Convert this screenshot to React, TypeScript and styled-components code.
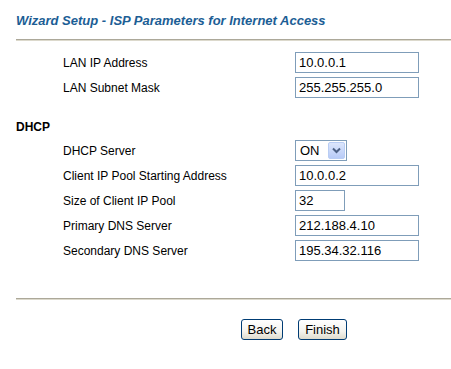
import React from "react";
import styled, { createGlobalStyle } from "styled-components";

const GlobalStyle = createGlobalStyle`
    html, body {
        margin: 0;
        padding: 0;
        background: #ffffff;
    }
    body {
        font-family: "Liberation Sans", Arial, sans-serif;
        font-size: 12px;
        color: #000000;
    }
`;

const Page = styled.div`
    width: 451px;
    height: 369px;
    padding: 13px 0 0 16px;
    box-sizing: border-box;
    overflow: hidden;
`;

const Title = styled.h1`
    margin: 0;
    height: 20px;
    font-size: 13px;
    font-weight: bold;
    font-style: italic;
    color: #1c5e95;
    line-height: 16px;
`;

const Divider = styled.div`
    height: 2px;
    margin-top: ${(p: { $top: number }) => p.$top}px;
    background: #aca899;
    border-bottom: 1px solid #dcd9cc;
    box-sizing: border-box;
`;

const Fields = styled.div`
    display: flex;
    flex-direction: column;
    gap: 4px;
    padding-left: 47px;
    margin-top: ${(p: { $top: number }) => p.$top}px;
`;

const Row = styled.div`
    display: grid;
    grid-template-columns: 232px auto;
    align-items: center;
    height: 21px;
`;

const Label = styled.span`
    font-size: 12px;
    color: #000000;
`;

const Box = styled.div<{ $w: number }>`
    width: ${(p) => p.$w}px;
    height: 21px;
    box-sizing: border-box;
    border: 1px solid #7f9db9;
    padding: 0 3px;
    font-size: 13px;
    line-height: 19px;
    background: #ffffff;
    white-space: nowrap;
`;

const SectionHead = styled.div`
    margin-top: 21px;
    font-size: 12px;
    font-weight: bold;
    height: 16px;
    line-height: 16px;
`;

const Select = styled.div`
    display: flex;
    align-items: center;
    justify-content: space-between;
    width: 52px;
    height: 21px;
    box-sizing: border-box;
    border: 1px solid #7f9db9;
    padding: 1px 1px 1px 4px;
    font-size: 13px;
    background: #ffffff;
`;

const ArrowButton = styled.span`
    display: flex;
    align-items: center;
    justify-content: center;
    width: 17px;
    height: 17px;
    box-sizing: border-box;
    border: 1px solid #b9cdf4;
    border-radius: 2px;
    background: linear-gradient(#dce6fc, #b8cbf7);
`;

const Buttons = styled.div`
    display: flex;
    gap: 15px;
    padding-left: 225px;
    margin-top: 19px;
`;

const Button = styled.button<{ $w: number }>`
    width: ${(p) => p.$w}px;
    height: 21px;
    padding: 0;
    box-sizing: border-box;
    border: 1px solid #003c74;
    border-radius: 3px;
    background: linear-gradient(#ffffff 0%, #f4f3ee 60%, #dedbcd 100%);
    font-family: "Liberation Sans", Arial, sans-serif;
    font-size: 13px;
    color: #000000;
`;

const lanRows = [
    { label: "LAN IP Address", value: "10.0.0.1", w: 124 },
    { label: "LAN Subnet Mask", value: "255.255.255.0", w: 124 },
];

const dhcpRows = [
    { label: "Client IP Pool Starting Address", value: "10.0.0.2", w: 124 },
    { label: "Size of Client IP Pool", value: "32", w: 50 },
    { label: "Primary DNS Server", value: "212.188.4.10", w: 124 },
    { label: "Secondary DNS Server", value: "195.34.32.116", w: 124 },
];

const App: React.FC = () => {
    return (
        <Page>
            <GlobalStyle />
            <Title>Wizard Setup - ISP Parameters for Internet Access</Title>
            <Divider $top={6} />
            <Fields $top={11}>
                {lanRows.map((r) => (
                    <Row key={r.label}>
                        <Label>{r.label}</Label>
                        <Box $w={r.w}>{r.value}</Box>
                    </Row>
                ))}
            </Fields>
            <SectionHead>DHCP</SectionHead>
            <Fields $top={5}>
                <Row>
                    <Label>DHCP Server</Label>
                    <Select>
                        ON
                        <ArrowButton>
                            <svg width="9" height="7" viewBox="0 0 9 7">
                                <path d="M1 1.5 L4.5 5 L8 1.5" fill="none" stroke="#4d6185" strokeWidth="2" />
                            </svg>
                        </ArrowButton>
                    </Select>
                </Row>
                {dhcpRows.map((r) => (
                    <Row key={r.label}>
                        <Label>{r.label}</Label>
                        <Box $w={r.w}>{r.value}</Box>
                    </Row>
                ))}
            </Fields>
            <Divider $top={37} />
            <Buttons>
                <Button $w={42}>Back</Button>
                <Button $w={49}>Finish</Button>
            </Buttons>
        </Page>
    );
};

export default App;
